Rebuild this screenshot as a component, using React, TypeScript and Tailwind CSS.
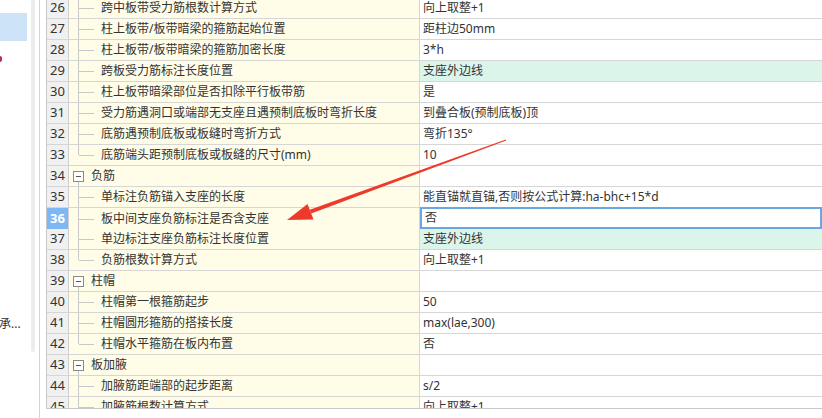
import React from "react";

type Row = {
    n: number;
    name: string;
    value?: string;
    kind: "group" | "child";
    last?: boolean;
    green?: boolean;
    selected?: boolean;
};

const rows: Row[] = [
    { n: 26, name: "跨中板带受力筋根数计算方式", value: "向上取整+1", kind: "child" },
    { n: 27, name: "柱上板带/板带暗梁的箍筋起始位置", value: "距柱边50mm", kind: "child" },
    { n: 28, name: "柱上板带/板带暗梁的箍筋加密长度", value: "3*h", kind: "child" },
    { n: 29, name: "跨板受力筋标注长度位置", value: "支座外边线", kind: "child", green: true },
    { n: 30, name: "柱上板带暗梁部位是否扣除平行板带筋", value: "是", kind: "child" },
    { n: 31, name: "受力筋遇洞口或端部无支座且遇预制底板时弯折长度", value: "到叠合板(预制底板)顶", kind: "child" },
    { n: 32, name: "底筋遇预制底板或板缝时弯折方式", value: "弯折135°", kind: "child" },
    { n: 33, name: "底筋端头距预制底板或板缝的尺寸(mm)", value: "10", kind: "child", last: true },
    { n: 34, name: "负筋", kind: "group" },
    { n: 35, name: "单标注负筋锚入支座的长度", value: "能直锚就直锚,否则按公式计算:ha-bhc+15*d", kind: "child" },
    { n: 36, name: "板中间支座负筋标注是否含支座", value: "否", kind: "child", selected: true },
    { n: 37, name: "单边标注支座负筋标注长度位置", value: "支座外边线", kind: "child", green: true },
    { n: 38, name: "负筋根数计算方式", value: "向上取整+1", kind: "child", last: true },
    { n: 39, name: "柱帽", kind: "group" },
    { n: 40, name: "柱帽第一根箍筋起步", value: "50", kind: "child" },
    { n: 41, name: "柱帽圆形箍筋的搭接长度", value: "max(lae,300)", kind: "child" },
    { n: 42, name: "柱帽水平箍筋在板内布置", value: "否", kind: "child", last: true },
    { n: 43, name: "板加腋", kind: "group" },
    { n: 44, name: "加腋筋距端部的起步距离", value: "s/2", kind: "child" },
    { n: 45, name: "加腋筋根数计算方式", value: "向上取整+1", kind: "child" },
];

function TreeCell({ row }: { row: Row }) {
    if (row.kind === "group") {
        return (
            <div className="relative flex h-full items-center bg-[#fffde8] border-r border-[#d6d6d6]">
                {/* expand box */}
                <div className="ml-[4px] flex h-[11px] w-[11px] items-center justify-center border border-[#8a8a8a] bg-white">
                    <div className="h-px w-[5px] bg-[#555]" />
                </div>
                <span className="ml-[7px] text-[#333]">{row.name}</span>
                <div className="absolute left-[9px] top-[16px] bottom-0 w-px bg-[#c8c8c8]" />
            </div>
        );
    }
    return (
        <div className="relative flex h-full items-center bg-[#fffde8] border-r border-[#d6d6d6]">
            <div className={"absolute left-[9px] top-0 w-px bg-[#c8c8c8] " + (row.last ? "h-1/2" : "h-full")} />
            <div className="absolute left-[10px] top-1/2 h-px w-[15px] bg-[#c8c8c8]" />
            <span className="ml-[32px] whitespace-nowrap text-[#333]">{row.name}</span>
        </div>
    );
}

function ValueCell({ row }: { row: Row }) {
    if (row.selected) {
        return (
            <div className="flex h-[22px] -mt-px items-center border-2 border-[#6aa6e0] bg-white pl-[3px] text-[#333]">
                {row.value}
            </div>
        );
    }
    return (
        <div className={"flex h-full items-center whitespace-nowrap pl-[3px] text-[#333] " + (row.green ? "bg-[#dcf5ea]" : "bg-white")}>
            {row.value}
        </div>
    );
}

export default function App() {
    return (
        <div
            className="relative flex h-[418px] w-[822px] overflow-hidden bg-white text-[12px]"
            style={{ fontFamily: '"Noto Sans", "Noto Sans CJK SC", sans-serif' }}
        >
            {/* left tree panel */}
            <div className="flex h-full w-[40px] shrink-0 border-r border-[#d4d4d4]">
                <div className="flex w-[31px] flex-col">
                    <div className="mt-[13px] h-[28px] w-[27px] bg-[#cce3f7]" />
                    <div className="mt-[15px] h-[6px] w-[2px] rounded-r bg-[#b8334e]" />
                    <div className="mt-[255px] -ml-px whitespace-nowrap leading-[14px] text-[#333]">承...</div>
                </div>
                <div className="h-[352px] w-[4px] rounded-b bg-[#ececec]" />
            </div>

            {/* property grid */}
            <div className="ml-[6px] flex h-[409px] flex-1 flex-col overflow-hidden border-b border-l border-[#c8c8c8]">
                <div className="-mt-[2px] flex flex-col">
                    {rows.map((row) => (
                        <div
                            key={row.n}
                            className="grid h-[21px] grid-cols-[22px_351px_1fr] border-b border-[#d6d6d6]"
                        >
                            <div
                                className={
                                    "flex h-full items-center justify-center border-r border-[#cfcfcf] text-[13px] " +
                                    (row.selected ? "bg-[#7db8f4] font-bold text-white" : "bg-[#f0f0f0] text-[#333]")
                                }
                            >
                                {row.n}
                            </div>
                            <TreeCell row={row} />
                            <ValueCell row={row} />
                        </div>
                    ))}
                </div>
            </div>

            {/* annotation arrow */}
            <svg className="pointer-events-none absolute inset-0" width="822" height="418">
                <polygon
                    points="506.2,140.5 505.8,139.5 309.8,209.8 311.2,213.6"
                    fill="#ee3a2c"
                />
                <polygon points="287,220 313.5,219.5 307.5,204" fill="#ee3a2c" />
            </svg>
        </div>
    );
}
